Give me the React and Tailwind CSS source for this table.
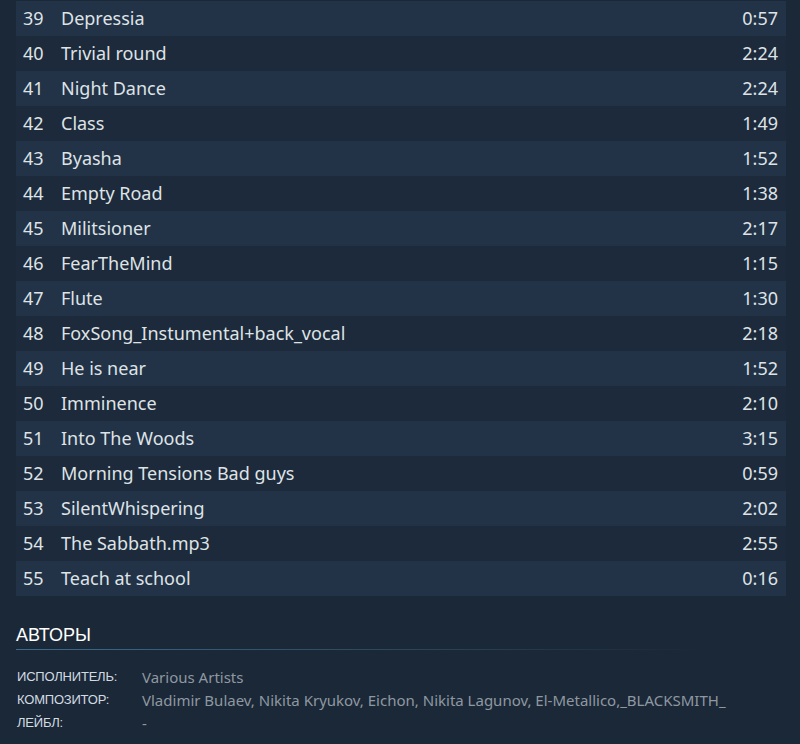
import React from "react";

const tracks = [
  [39, "Depressia", "0:57"],
  [40, "Trivial round", "2:24"],
  [41, "Night Dance", "2:24"],
  [42, "Class", "1:49"],
  [43, "Byasha", "1:52"],
  [44, "Empty Road", "1:38"],
  [45, "Militsioner", "2:17"],
  [46, "FearTheMind", "1:15"],
  [47, "Flute", "1:30"],
  [48, "FoxSong_Instumental+back_vocal", "2:18"],
  [49, "He is near", "1:52"],
  [50, "Imminence", "2:10"],
  [51, "Into The Woods", "3:15"],
  [52, "Morning Tensions Bad guys", "0:59"],
  [53, "SilentWhispering", "2:02"],
  [54, "The Sabbath.mp3", "2:55"],
  [55, "Teach at school", "0:16"],
];

const credits = [
  ["Исполнитель:", "Various Artists"],
  ["Композитор:", "Vladimir Bulaev, Nikita Kryukov, Eichon, Nikita Lagunov, El-Metallico,_BLACKSMITH_"],
  ["Лейбл:", "-"],
];

export default function App() {
  return (
    <div className="w-[800px] h-[744px] overflow-hidden bg-[#1b2838] font-['Noto_Sans',sans-serif]">
      <div className="pl-4 pr-[14px] pt-px">
        {/* Track list */}
        <div className="flex flex-col">
          {tracks.map(([n, title, time], i) => (
            <div
              key={n}
              className={`h-[35px] flex items-center text-[18px] text-[#dfe3e6] ${
                i % 2 === 0 ? "bg-[#223247]" : "bg-[#1c2a3b]"
              }`}
            >
              <span className="w-[45px] pl-[7px]">{n}</span>
              <span className="flex-1">{title}</span>
              <span className="pr-[8px]">{time}</span>
            </div>
          ))}
        </div>

        {/* Credits */}
        <div className="mt-[28px] pr-[86px]">
          <h2 className="text-[18px] uppercase text-white font-['Liberation_Sans',sans-serif] leading-[22px] pb-[3px]">
            Авторы
          </h2>
          <div className="h-px bg-gradient-to-r from-[#3d6c8d] via-[#2f4a60] to-transparent" />
        </div>
        <div className="mt-[18px] flex flex-col gap-[5px]">
          {credits.map(([label, value]) => (
            <div key={label} className="flex items-center h-[18px]">
              <span className="w-[126px] pl-px uppercase text-[13px] text-[#d2dbe2] font-['Liberation_Sans',sans-serif] tracking-[-0.2px]">
                {label}
              </span>
              <span className="text-[15px] text-[#8f98a0]">{value}</span>
            </div>
          ))}
        </div>
      </div>
    </div>
  );
}
